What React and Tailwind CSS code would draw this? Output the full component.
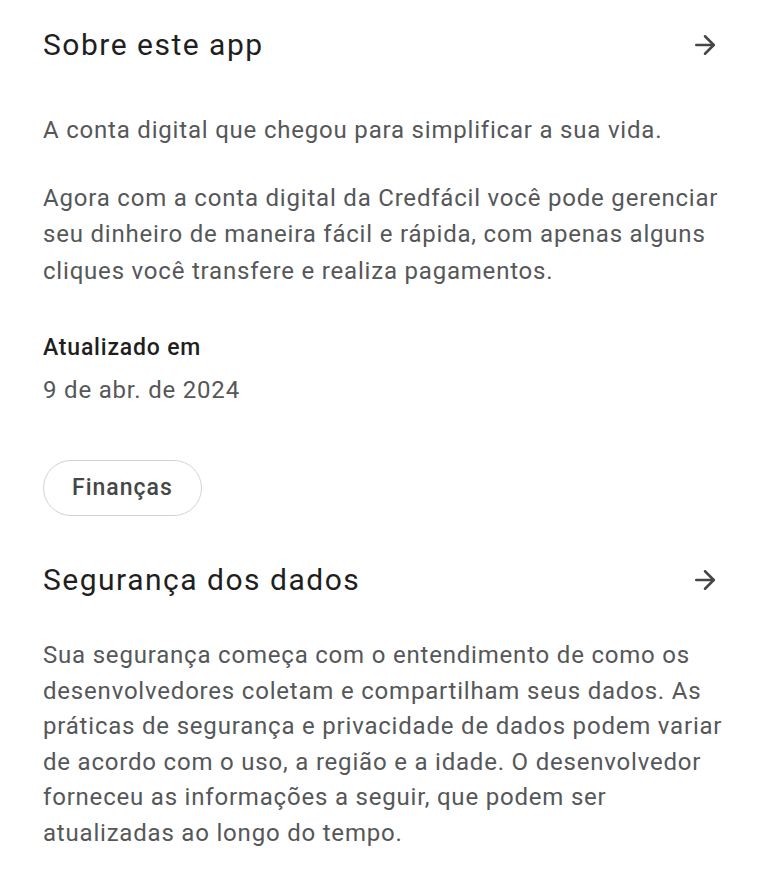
import { ArrowRight } from "lucide-react";

function SectionHeader({ title }) {
  return (
    <div className="flex items-center justify-between">
      <h2 className="text-[30px] leading-[40px] tracking-[1.5px] text-[#1f1f1f]">{title}</h2>
      <ArrowRight className="mr-[5px] h-[30px] w-[30px] text-[#444746]" strokeWidth={2} />
    </div>
  );
}

export default function App() {
  return (
    <div
      className="min-h-screen w-full bg-white px-[43px] pt-[25px]"
      style={{ fontFamily: "Roboto, 'Noto Sans', sans-serif" }}
    >
      <SectionHeader title="Sobre este app" />

      <div className="mt-[47px] text-[24px] leading-[36.5px] tracking-[0.8px] text-[#555759]">
        <p>A conta digital que chegou para simplificar a sua vida.</p>
        <p className="mt-[31px]">
          Agora com a conta digital da Credfácil você pode gerenciar seu
          dinheiro de maneira fácil e rápida, com apenas alguns cliques você
          transfere e realiza pagamentos.
        </p>
      </div>

      <div className="mt-[43px]">
        <p className="text-[23px] font-medium leading-[32px] tracking-[0.8px] text-[#1f1f1f]">
          Atualizado em
        </p>
        <p className="mt-[10px] text-[24px] leading-[32px] tracking-[0.8px] text-[#555759]">
          9 de abr. de 2024
        </p>
      </div>

      <div className="mt-[54px] flex">
        <span className="flex h-[56px] items-center rounded-full border border-[#d3d3d3] px-[28px] text-[23px] font-medium tracking-[1px] text-[#444746]">
          Finanças
        </span>
      </div>

      <div className="mt-[44px]">
        <SectionHeader title="Segurança dos dados" />
      </div>

      <p className="mt-[38px] text-[24px] leading-[35.5px] tracking-[0.8px] text-[#555759]">
        Sua segurança começa com o entendimento de como os desenvolvedores
        coletam e compartilham seus dados. As práticas de segurança e
        privacidade de dados podem variar de acordo com o uso, a região e a
        idade. O desenvolvedor forneceu as informações a seguir, que podem ser
        atualizadas ao longo do tempo.
      </p>
    </div>
  );
}
